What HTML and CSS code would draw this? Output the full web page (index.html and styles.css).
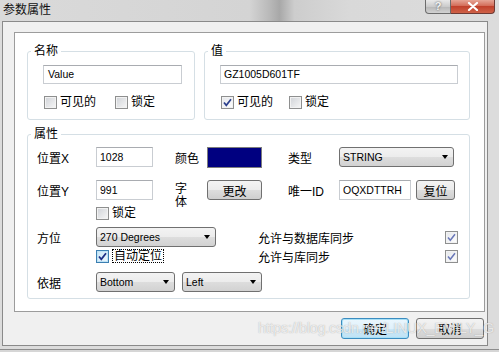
FILE: index.html
```html
<!DOCTYPE html>
<html lang="zh-CN">
<head>
  <meta charset="UTF-8" />
  <title>参数属性</title>
  <link rel="stylesheet" href="styles.css">
</head>
<body>
<div class="window">
  <div class="titlebar">
    <span class="title">参数属性</span>
    <div class="caption">
      <span class="cap-help">?</span>
      <span class="cap-close">
        <svg width="12" height="9" viewBox="0 0 12 9"><path d="M2 1 L10 8 M10 1 L2 8" stroke="#fff" stroke-width="2.2" stroke-linecap="round"/></svg>
      </span>
    </div>
  </div>

  <div class="client">
    <div class="panel">
      <div class="top-row">
        <fieldset class="group group-name">
          <legend>名称</legend>
          <div class="group-body">
            <div class="textbox name-box">Value</div>
            <div class="checks">
              <label class="check"><span class="box"></span>可见的</label>
              <label class="check"><span class="box"></span>锁定</label>
            </div>
          </div>
        </fieldset>
        <fieldset class="group group-value">
          <legend>值</legend>
          <div class="group-body">
            <div class="textbox value-box">GZ1005D601TF</div>
            <div class="checks">
              <label class="check"><span class="box checked"><svg width="11" height="11" viewBox="0 0 11 11"><path d="M2 5.5 L4.3 8.3 L9 2.3" fill="none" stroke="#2b3f8c" stroke-width="1.7"/></svg></span>可见的</label>
              <label class="check"><span class="box"></span>锁定</label>
            </div>
          </div>
        </fieldset>
      </div>

      <fieldset class="group group-props">
        <legend>属性</legend>
        <div class="props-body">
          <div class="prop-row">
            <span class="lbl">位置X</span>
            <div class="textbox num-box">1028</div>
            <span class="lbl mid-lbl">颜色</span>
            <div class="swatch"></div>
            <span class="lbl right-lbl">类型</span>
            <div class="combo type-combo">STRING<span class="arrow"></span></div>
          </div>
          <div class="prop-row row-2">
            <span class="lbl">位置Y</span>
            <div class="textbox num-box">991</div>
            <span class="lbl mid-lbl"><span class="font-lbl">字体</span></span>
            <div class="btn change-btn">更改</div>
            <span class="lbl right-lbl">唯一ID</span>
            <div class="textbox id-box">OQXDTTRH</div>
            <div class="btn reset-btn">复位</div>
          </div>
          <div class="prop-row row-3">
            <span class="lbl"></span>
            <label class="check"><span class="box"></span>锁定</label>
          </div>
          <div class="prop-row row-4">
            <span class="lbl">方位</span>
            <div class="slot">
              <div class="combo angle-combo">270 Degrees<span class="arrow"></span></div>
            </div>
            <span class="sync-lbl">允许与数据库同步</span>
            <span class="box checked"><svg width="11" height="11" viewBox="0 0 11 11"><path d="M2 5.5 L4.3 8.3 L9 2.3" fill="none" stroke="#6a78b8" stroke-width="1.5"/></svg></span>
          </div>
          <div class="prop-row row-5">
            <span class="lbl"></span>
            <div class="slot">
              <label class="check"><span class="box checked hot"><svg width="11" height="11" viewBox="0 0 11 11"><path d="M2 5.5 L4.3 8.3 L9 2.3" fill="none" stroke="#1c2f86" stroke-width="1.8"/></svg></span><span class="focus">自动定位</span></label>
            </div>
            <span class="sync-lbl">允许与库同步</span>
            <span class="box checked"><svg width="11" height="11" viewBox="0 0 11 11"><path d="M2 5.5 L4.3 8.3 L9 2.3" fill="none" stroke="#6a78b8" stroke-width="1.5"/></svg></span>
          </div>
          <div class="prop-row row-6">
            <span class="lbl">依据</span>
            <div class="combo base-combo">Bottom<span class="arrow"></span></div>
            <div class="combo side-combo">Left<span class="arrow"></span></div>
          </div>
        </div>
      </fieldset>
    </div>

    <div class="buttons">
      <div class="btn dlg-btn default">确定</div>
      <div class="btn dlg-btn">取消</div>
    </div>
  </div>

  <span class="watermark">https://blog.csdn.net/LINUX_EMILY_G</span>
</div>
</body>
</html>
```

FILE: styles.css
```css
* { margin: 0; padding: 0; box-sizing: border-box; }
body { width: 499px; height: 352px; overflow: hidden; background: #d6d6d6; font-family: "Liberation Sans", "Noto Sans CJK SC", sans-serif; font-size: 12px; color: #000; }

.window { position: relative; height: 350px; display: flex; flex-direction: column; background: #dcdcdc; border-bottom: 1px solid #8c8c8c; }
.titlebar {
  height: 21px; display: flex; justify-content: space-between; align-items: flex-start;
  background: linear-gradient(90deg, #dadada 0%, #d4d4d4 50%, #b9b9b9 54%, #a8a8a8 56%, #cdcdcd 59%, #d9d9d9 70%, #dcdcdc 100%);
}
.title { padding: 3px 0 0 3px; font-size: 12px; line-height: 14px; color: #111; }
.caption { display: flex; margin-right: 4px; }
.cap-help {
  width: 26px; height: 14px; border: 1px solid #6c6c6c; border-top: none; border-radius: 0 0 0 4px;
  background: linear-gradient(#e9e9e9, #cbcbcb 50%, #b6b6b6 51%, #d2d2d2);
  text-align: center; font-size: 11px; line-height: 12px; font-weight: bold; color: #f4f4f4; text-shadow: 0 0 2px #444;
}
.cap-close {
  width: 44px; height: 14px; border: 1px solid #6e3a34; border-top: none; border-left: none; border-radius: 0 0 4px 0;
  background: linear-gradient(#e6a596, #d36c58 45%, #c1412c 50%, #cf6248);
  display: flex; justify-content: center; align-items: center;
}

.client { flex: 1; margin: 0 11px 3px 2px; border: 1px solid #8a8a8a; background: #f0f0f0; padding: 10px 2px 0 11px; }
.panel { height: 280px; background: #fff; border: 1px solid #9c9c9c; padding: 11px 14px 0 12px; }

.top-row { display: flex; gap: 9px; margin-bottom: 7px; }
.group { border: 1px solid #d5dfe5; border-radius: 3px; min-width: 0; }
.group legend { margin-left: 3px; padding: 0 3px; line-height: 14px; font-size: 12px; }
.group-name { width: 168px; height: 76px; }
.group-value { width: 266px; height: 76px; }
.group-props { height: 172px; }
.group-body { padding: 7px 0 0 15px; }

.textbox {
  height: 19px; border: 1px solid #c9cdd2; border-top-color: #a9acb1; background: #fff;
  padding-left: 3px; font-size: 10.5px; line-height: 17px; white-space: nowrap;
}
.name-box { width: 139px; padding-left: 4px; }
.value-box { width: 238px; }
.num-box { width: 57px; height: 20px; line-height: 18px; }
.id-box { width: 72px; height: 20px; line-height: 18px; }

.checks { display: flex; margin-top: 12px; padding-left: 1px; }
.group-name .checks { gap: 19px; }
.group-value .checks { gap: 16px; }
.check { display: flex; align-items: center; gap: 3px; line-height: 13px; }
.box {
  width: 13px; height: 13px; flex: none; border: 1px solid #8e8f8f;
  background: linear-gradient(135deg, #cfd2d7, #f7f7f7); box-shadow: inset 0 0 0 1px #f2f2f2;
  display: flex; align-items: center; justify-content: center;
}
.box.checked { background: linear-gradient(135deg, #e4e6ea, #ffffff); }
.box.hot { border-color: #3c7fb1; background: linear-gradient(135deg, #c9e6f7, #eef8fd); box-shadow: inset 0 0 0 1px #bfe3f7; }
.focus { border: 1px dotted #000; padding: 0 1px; line-height: 12px; }

.props-body { padding: 6px 11px 0 9px; }
.prop-row { display: flex; align-items: center; height: 20px; }
.row-2 { margin-top: 13px; }
.row-3 { margin-top: 6px; height: 14px; }
.row-4 { margin-top: 7px; }
.row-5 { margin-top: 1px; height: 16px; }
.row-6 { margin-top: 8px; }
.lbl { width: 59px; flex: none; }
.mid-lbl { width: 32px; margin-left: 22px; }
.right-lbl { width: 51px; margin-left: 26px; }
.font-lbl { display: block; width: 13px; line-height: 13px; margin-top: 11px; }
.slot { width: 162px; flex: none; }
.sync-lbl { flex: 1; }

.swatch { width: 55px; height: 21px; background: #000080; border: 1px solid #7d7d7d; }

.combo {
  height: 20px; display: flex; align-items: center; justify-content: space-between;
  border: 1px solid #707070; border-radius: 3px; padding: 0 5px 0 3px;
  background: linear-gradient(#f3f3f3, #ececec 50%, #dddddd 51%, #d2d2d2);
  font-size: 10.5px; white-space: nowrap;
}
.arrow { width: 0; height: 0; border-left: 3.5px solid transparent; border-right: 3.5px solid transparent; border-top: 4px solid #000; }
.type-combo { width: 115px; }
.angle-combo { width: 120px; }
.base-combo { width: 79px; }
.side-combo { width: 80px; margin-left: 7px; }

.btn {
  height: 20px; display: flex; align-items: center; justify-content: center;
  border: 1px solid #707070; border-radius: 3px;
  background: linear-gradient(#f3f3f3, #ebebeb 50%, #dddddd 51%, #cfcfcf);
}
.change-btn { width: 55px; }
.reset-btn { width: 39px; margin-left: 5px; }

.buttons { display: flex; justify-content: flex-end; gap: 7px; margin-top: 6px; padding-right: 1px; }
.dlg-btn { width: 68px; height: 21px; }
.dlg-btn.default { border-color: #3b8cc0; box-shadow: inset 0 0 0 1px #a7e0f6; background: linear-gradient(#eaf6fd, #e0f1fb 50%, #cce8f7 51%, #bfe2f5); }

.watermark {
  position: absolute; left: 258px; top: 320px; font-size: 14.5px; letter-spacing: -0.3px; white-space: nowrap;
  color: rgba(255, 255, 255, 0.75); text-shadow: 0 0 1px rgba(90, 90, 90, 0.5);
}
```
